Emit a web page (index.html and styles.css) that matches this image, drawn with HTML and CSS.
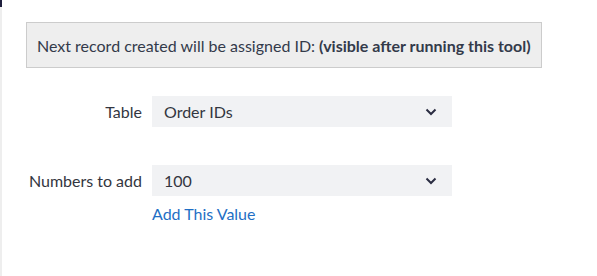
FILE: index.html
```html
<!DOCTYPE html>
<html>
<head>
<meta charset="utf-8">
<link rel="stylesheet" href="styles.css">
</head>
<body>
<div class="page">
  <div class="notice">Next record created will be assigned ID: <b>(visible after running this tool)</b></div>
  <div class="form">
    <div class="row">
      <label class="label">Table</label>
      <div class="field">
        <div class="select"><span>Order IDs</span>
          <svg class="chev" width="12" height="8" viewBox="0 0 12 8"><path d="M1.5 1.5 L6 6 L10.5 1.5" fill="none" stroke="#2b2d42" stroke-width="2"/></svg>
        </div>
      </div>
    </div>
    <div class="row row2">
      <label class="label">Numbers to add</label>
      <div class="field">
        <div class="select"><span>100</span>
          <svg class="chev" width="12" height="8" viewBox="0 0 12 8"><path d="M1.5 1.5 L6 6 L10.5 1.5" fill="none" stroke="#2b2d42" stroke-width="2"/></svg>
        </div>
        <a class="link" href="#">Add This Value</a>
      </div>
    </div>
  </div>
</div>
</body>
</html>
```
FILE: styles.css
```css
html, body { margin: 0; padding: 0; background: #fff; }
body { font-family: Lato, "Open Sans", sans-serif; font-size: 16px; color: #333640; }
.page {
  min-height: 276px;
  box-sizing: border-box;
  border-left: 2px solid #eeeeee;
  padding: 22px 0 0 24px;
  position: relative;
}
.page::before {
  content: "";
  position: absolute; left: -2px; top: 0; width: 2px; height: 7px; background: #1e1e3c;
}
.notice {
  width: 516px;
  height: 46px;
  box-sizing: border-box;
  border: 1px solid #cccccc;
  background: #eeeeee;
  padding: 0 10px;
  display: flex; align-items: center;
  color: #333a4a;
}
.notice b { margin-left: 4px; font-weight: 700; }
.form { margin-top: 28px; }
.row { display: flex; align-items: flex-start; }
.row2 { margin-top: 38px; }
.label { width: 116px; text-align: right; line-height: 31px; color: #333640; }
.field { margin-left: 10px; display: flex; flex-direction: column; }
.select {
  width: 300px; height: 31px; box-sizing: border-box;
  background: #f1f2f4;
  padding: 0 12px;
  display: flex; align-items: center; justify-content: space-between;
  color: #333640;
}
.chev { margin-right: 3px; }
.link { color: #1f6fc5; text-decoration: none; margin-top: 8px; line-height: 20px; }
```
